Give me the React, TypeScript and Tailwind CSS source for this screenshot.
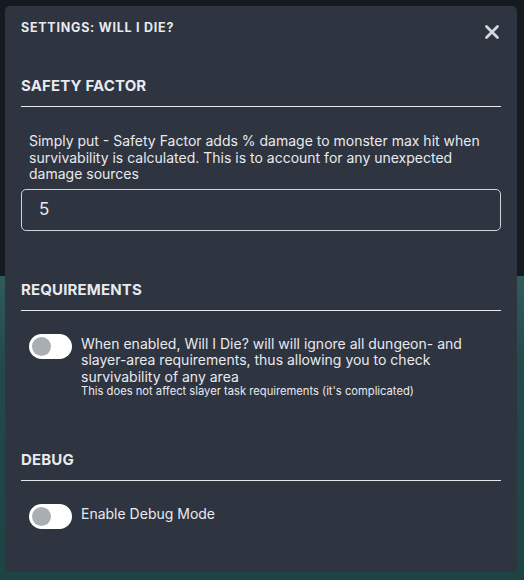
import { X } from "lucide-react";

const Toggle = () => (
  <div className="w-[43px] h-[25px] shrink-0 rounded-full bg-white flex items-center px-[3px]">
    <div className="w-[19px] h-[19px] rounded-full bg-[#a9aeb5]" />
  </div>
);

const SectionHeading = ({ title }: { title: string }) => (
  <div className="pb-[11px] border-b border-[#e5e7eb]">
    <h2 className="text-[15px] font-bold tracking-[0.01em] text-[#e8eaee] leading-[18px]">{title}</h2>
  </div>
);

export default function App() {
  return (
    <div
      className="w-[524px] h-[580px] pt-[6px] pl-[5px] bg-[linear-gradient(to_bottom,#151a21_0px,#151a21_276px,#2f5c5b_276px,#24494a_365px,#1f4243_100%)]"
      style={{ fontFamily: "Inter, 'Noto Sans', sans-serif" }}
    >
      <div className="w-[512px] h-[566px] rounded-[5px] bg-[#2e3440] px-4 pt-[14px] text-[#e8eaee]">
        <div className="flex items-start justify-between h-[15px]">
          <h1 className="text-[12.5px] font-bold tracking-[0.06em] leading-[15px]">SETTINGS: WILL I DIE?</h1>
          <X className="w-[22px] h-[22px] shrink-0 text-[#d6d9de] -mr-[2px] mt-[1px]" strokeWidth={3} />
        </div>

        <div className="mt-[42px]">
          <SectionHeading title="SAFETY FACTOR" />
          <p className="mt-[26px] px-2 text-[14px] leading-[16.5px]">
            Simply put - Safety Factor adds % damage to monster max hit when survivability is calculated. This is to account for any unexpected damage sources
          </p>
          <div className="mt-[6px] h-[42px] rounded-[5px] border border-[#d1d5db] flex items-center px-[17px] text-[17px]">
            5
          </div>
        </div>

        <div className="mt-[50px]">
          <SectionHeading title="REQUIREMENTS" />
          <div className="mt-[23px] pl-2 flex gap-[9px] items-start">
            <Toggle />
            <div className="mt-[2px]">
              <p className="text-[14px] leading-[16.6px]">
                When enabled, Will I Die? will will ignore all dungeon- and slayer-area requirements, thus allowing you to check survivability of any area
              </p>
              <p className="text-[11.2px] leading-[13px]">This does not affect slayer task requirements (it's complicated)</p>
            </div>
          </div>
        </div>

        <div className="mt-[53px]">
          <SectionHeading title="DEBUG" />
          <div className="mt-[23px] pl-2 flex gap-[9px] items-start">
            <Toggle />
            <span className="mt-[2px] text-[14px] leading-[16.5px]">Enable Debug Mode</span>
          </div>
        </div>
      </div>
    </div>
  );
}
